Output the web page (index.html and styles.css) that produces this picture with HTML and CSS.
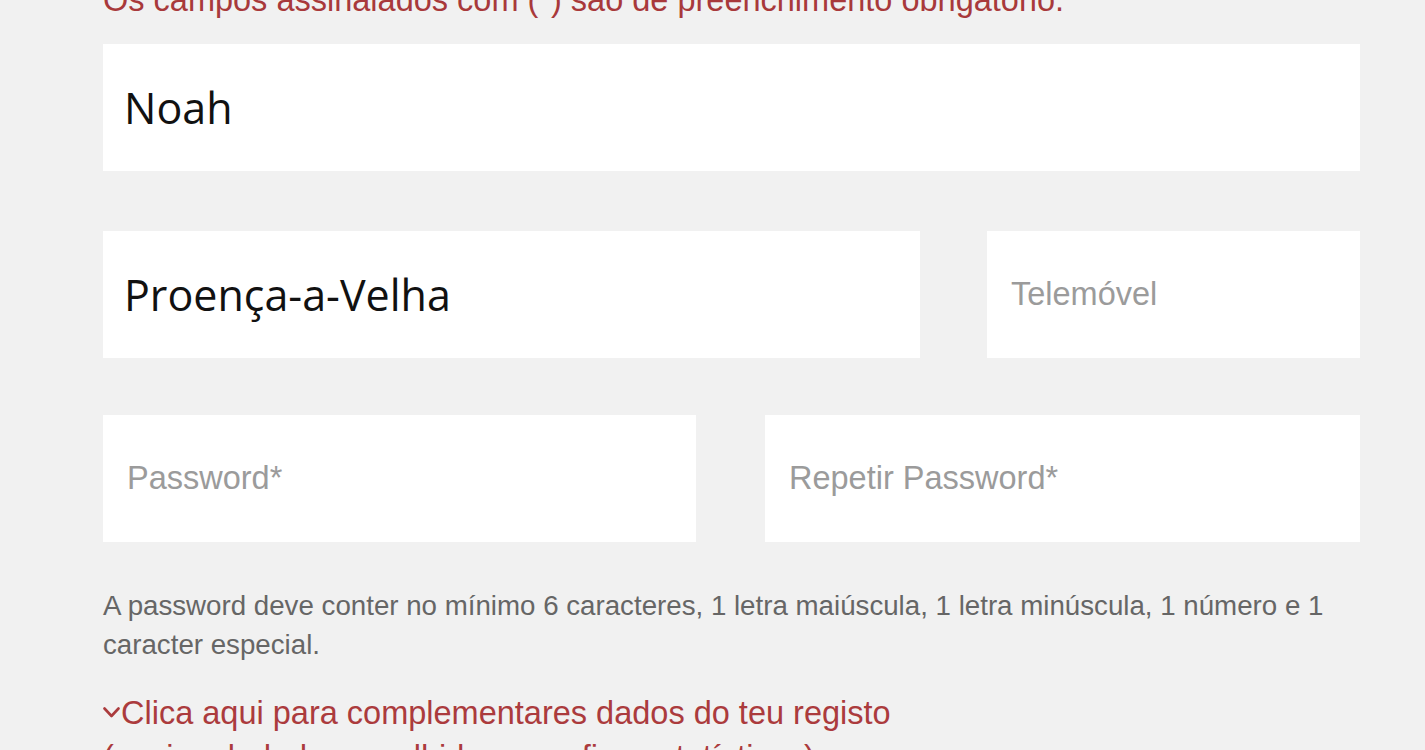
FILE: index.html
```html
<!DOCTYPE html>
<html lang="pt">
<head>
  <meta charset="UTF-8">
  <title>Registo</title>
  <link rel="stylesheet" href="styles.css">
</head>
<body>
  <div class="container">
    <p class="obrigatorio">Os campos assinalados com (*) são de preenchimento obrigatório.</p>

    <form id="registo">
      <div class="linha">
        <input type="text" class="campo preenchido" value="Noah" placeholder="Nome*">
      </div>

      <div class="linha linha-localidade">
        <input type="text" class="campo preenchido" value="Proença-a-Velha" placeholder="Localidade*">
        <input type="tel" class="campo" placeholder="Telemóvel">
      </div>

      <div class="linha linha-password">
        <input type="password" class="campo" placeholder="Password*">
        <input type="password" class="campo" placeholder="Repetir Password*">
      </div>

      <p class="ajuda">A password deve conter no mínimo 6 caracteres, 1 letra maiúscula, 1 letra minúscula, 1 número e 1 caracter especial.</p>

      <a href="#" class="complementar">
        <svg class="seta" width="17" height="11" viewBox="0 0 17 11"><path d="M1.5 1.5 L8.5 9 L15.5 1.5" fill="none" stroke="currentColor" stroke-width="2.6" stroke-linecap="round" stroke-linejoin="round"/></svg>Clica aqui para complementares dados do teu registo<br>
        (opcional: dados recolhidos para fins estatísticos)
      </a>
    </form>
  </div>
</body>
</html>
```

FILE: styles.css
```css
body {
  margin: 0;
  background: #f1f1f1;
  font-family: "Liberation Sans", Arial, sans-serif;
  overflow: hidden;
}

.container {
  width: 1257px;
  padding-left: 103px;
}

.obrigatorio {
  margin: -20px 0 0;
  font-size: 32.5px;
  line-height: 40px;
  color: #a8393b;
  white-space: nowrap;
}

.linha {
  display: flex;
  margin-top: 24px;
}

.linha-localidade {
  margin-top: 60px;
  gap: 67px;
}

.linha-localidade .campo:first-child {
  width: 817px;
  flex: none;
}

.linha-password {
  margin-top: 57px;
  gap: 69px;
}

.linha-password .campo:first-child {
  width: 593px;
  flex: none;
}

.campo {
  flex: 1;
  min-width: 0;
  height: 127px;
  box-sizing: border-box;
  border: none;
  background: #fff;
  padding: 0 24px;
  font-family: "Liberation Sans", Arial, sans-serif;
  font-size: 32.5px;
  color: #111;
  outline: none;
}

.campo.preenchido {
  padding: 0 21px;
  font-family: "Open Sans", "Noto Sans", sans-serif;
  font-size: 43px;
}

.campo::placeholder {
  color: #9b9b9b;
}

.ajuda {
  margin: 44px 0 0;
  font-size: 27.7px;
  line-height: 39px;
  color: #666;
}

.complementar {
  display: block;
  margin-top: 27px;
  font-size: 32.5px;
  line-height: 44px;
  color: #ab3b3d;
  text-decoration: none;
}

.seta {
  margin-right: 1px;
  vertical-align: 6px;
}
```
